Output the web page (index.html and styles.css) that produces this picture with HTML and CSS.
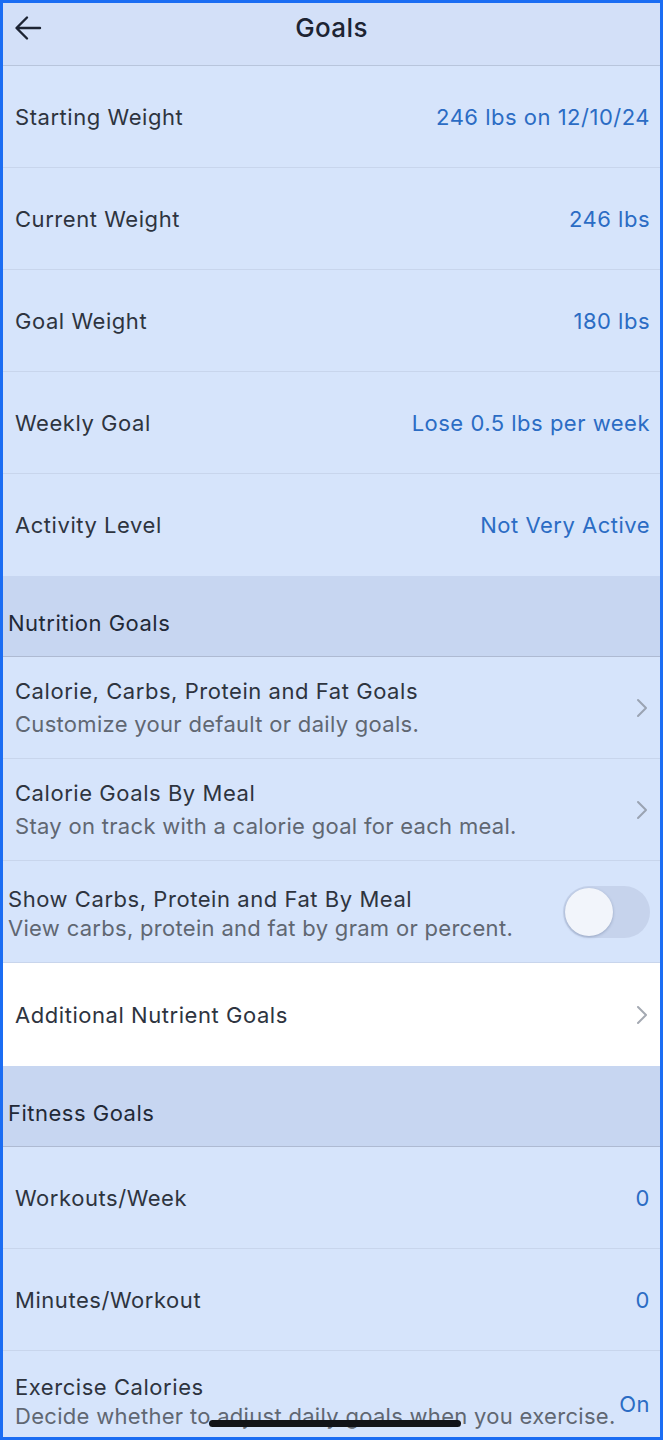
FILE: index.html
```html
<!DOCTYPE html>
<html>
<head>
<meta charset="utf-8">
<link rel="stylesheet" href="styles.css">
</head>
<body>
<div class="screen">
  <header class="topbar">
    <svg class="back" width="28" height="26" viewBox="0 0 28 26"><path d="M26 13H3M13 2.5L2.5 13L13 23.5" fill="none" stroke="#1d2433" stroke-width="2.4" stroke-linecap="round" stroke-linejoin="round"/></svg>
    <h1 class="title">Goals</h1>
  </header>

  <div class="row"><span class="label">Starting Weight</span><span class="value">246 lbs on 12/10/24</span></div>
  <div class="row"><span class="label">Current Weight</span><span class="value">246 lbs</span></div>
  <div class="row"><span class="label">Goal Weight</span><span class="value">180 lbs</span></div>
  <div class="row"><span class="label">Weekly Goal</span><span class="value">Lose 0.5 lbs per week</span></div>
  <div class="row last"><span class="label">Activity Level</span><span class="value">Not Very Active</span></div>

  <div class="section"><span>Nutrition Goals</span></div>

  <div class="row two">
    <div class="texts"><span class="label">Calorie, Carbs, Protein and Fat Goals</span><span class="sub">Customize your default or daily goals.</span></div>
    <svg class="chev" width="12" height="20" viewBox="0 0 12 20"><path d="M2 2l8 8-8 8" fill="none" stroke="#9aa3b2" stroke-width="2" stroke-linecap="round" stroke-linejoin="round"/></svg>
  </div>
  <div class="row two">
    <div class="texts"><span class="label">Calorie Goals By Meal</span><span class="sub">Stay on track with a calorie goal for each meal.</span></div>
    <svg class="chev" width="12" height="20" viewBox="0 0 12 20"><path d="M2 2l8 8-8 8" fill="none" stroke="#9aa3b2" stroke-width="2" stroke-linecap="round" stroke-linejoin="round"/></svg>
  </div>
  <div class="row two tight">
    <div class="texts"><span class="label">Show Carbs, Protein and Fat By Meal</span><span class="sub">View carbs, protein and fat by gram or percent.</span></div>
    <div class="toggle"><div class="knob"></div></div>
  </div>
  <div class="row white last">
    <span class="label">Additional Nutrient Goals</span>
    <svg class="chev" width="12" height="20" viewBox="0 0 12 20"><path d="M2 2l8 8-8 8" fill="none" stroke="#a4a9b2" stroke-width="2" stroke-linecap="round" stroke-linejoin="round"/></svg>
  </div>

  <div class="section"><span>Fitness Goals</span></div>

  <div class="row"><span class="label">Workouts/Week</span><span class="value">0</span></div>
  <div class="row"><span class="label">Minutes/Workout</span><span class="value">0</span></div>
  <div class="row two cut">
    <div class="texts"><span class="label">Exercise Calories</span><span class="sub">Decide whether to adjust daily goals when you exercise.</span></div>
    <span class="value">On</span>
  </div>

  <div class="home"></div>
</div>
</body>
</html>
```

FILE: styles.css
```css
html, body {
  margin: 0;
  padding: 0;
}
body {
  font-family: Inter, Roboto, "Noto Sans", "Liberation Sans", sans-serif;
  background: #1b6df3;
}
.screen {
  position: relative;
  width: 663px;
  height: 1440px;
  box-sizing: border-box;
  border: 3px solid #1b6df3;
  background: #d6e4fb;
  overflow: hidden;
  color: #1f2633;
}
.topbar {
  height: 63px;
  background: #d3e0f8;
  border-bottom: 1px solid #b8c5dc;
  display: flex;
  align-items: flex-start;
  justify-content: center;
  position: relative;
  box-sizing: border-box;
  padding-top: 9px;
}
.back {
  position: absolute;
  left: 11px;
  top: 12px;
}
.title {
  margin: 0;
  font-size: 26px;
  line-height: 32px;
  font-weight: 500;
  color: #1d2433;
  letter-spacing: 0.4px;
}
.row {
  height: 102px;
  box-sizing: border-box;
  border-bottom: 1px solid #c8d5ec;
  display: flex;
  align-items: center;
  justify-content: space-between;
  padding: 0 10px 0 12px;
  background: #d6e4fb;
}
.row.last {
  border-bottom: none;
}
.row.white {
  background: #ffffff;
  height: 103px;
}
.label {
  font-size: 22px;
  line-height: 28px;
  color: #2e343f;
  letter-spacing: 0.55px;
}
.value {
  font-size: 22px;
  line-height: 28px;
  color: #2b6cc4;
  letter-spacing: 0.5px;
}
.texts {
  display: flex;
  flex-direction: column;
  gap: 5px;
}
.sub {
  font-size: 22px;
  line-height: 28px;
  color: #606772;
  letter-spacing: 0.3px;
}
.row.tight {
  padding-left: 5px;
}
.row.tight .texts {
  gap: 1px;
  margin-top: 4px;
}
.chev {
  margin-right: 2px;
}
.section {
  height: 81px;
  box-sizing: border-box;
  background: #c7d6f1;
  border-bottom: 1px solid #aebad2;
  display: flex;
  align-items: flex-end;
  padding: 0 0 19px 5px;
  font-size: 22px;
  line-height: 28px;
  color: #222937;
  letter-spacing: 0.5px;
}
.toggle {
  width: 87px;
  height: 52px;
  border-radius: 26px;
  background: #c6d3ec;
  position: relative;
  flex: none;
  margin-right: 0;
}
.knob {
  position: absolute;
  left: 2px;
  top: 2px;
  width: 48px;
  height: 48px;
  border-radius: 50%;
  background: #f2f5fb;
  box-shadow: 0 1px 3px rgba(40, 60, 100, 0.3);
}
.row.cut {
  height: 90px;
  align-items: flex-end;
  padding-bottom: 11px;
  border-bottom: none;
}
.row.cut .texts {
  gap: 1px;
}
.row.cut .value {
  align-self: center;
  margin-top: 26px;
}
.home {
  position: absolute;
  left: 206px;
  top: 1417px;
  width: 252px;
  height: 7px;
  border-radius: 4px;
  background: #111318;
}
```
